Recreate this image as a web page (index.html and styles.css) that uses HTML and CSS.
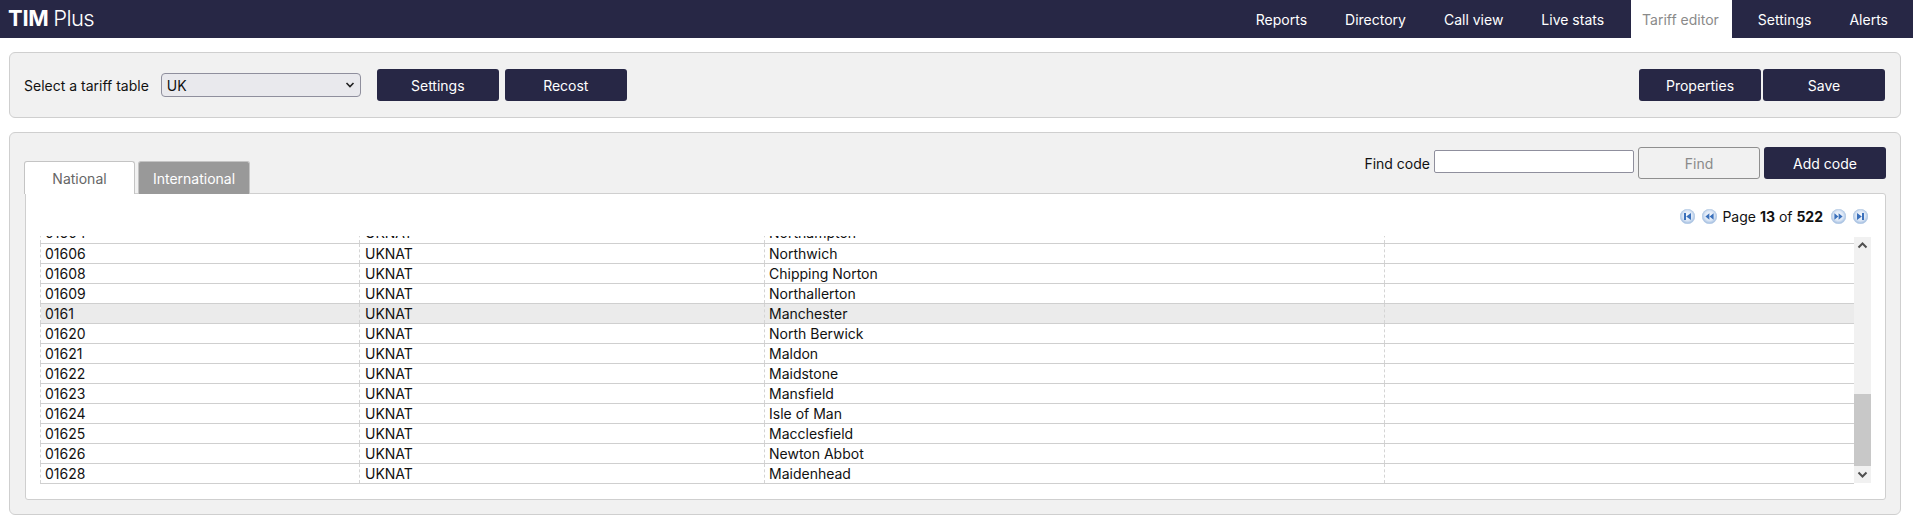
FILE: index.html
```html
<!DOCTYPE html>
<html lang="en">
<head>
  <meta charset="UTF-8">
  <meta name="viewport" content="width=device-width, initial-scale=1.0">
  <title>TIM Plus - Tariff editor</title>
  <link rel="stylesheet" href="styles.css">
</head>
<body>
  <header class="topbar">
    <div class="logo"><strong>TIM</strong> <span>Plus</span></div>
    <nav class="mainnav">
      <a href="#">Reports</a>
      <a href="#">Directory</a>
      <a href="#">Call view</a>
      <a href="#">Live stats</a>
      <a href="#" class="current">Tariff editor</a>
      <a href="#">Settings</a>
      <a href="#">Alerts</a>
    </nav>
  </header>

  <section class="panel toolbar">
    <label class="table-label" for="tariffTable">Select a tariff table</label>
    <select id="tariffTable" class="table-select"><option>UK</option></select>
    <div class="btn-group">
      <button class="btn">Settings</button>
      <button class="btn">Recost</button>
    </div>
    <div class="btn-group push-right">
      <button class="btn">Properties</button>
      <button class="btn">Save</button>
    </div>
  </section>

  <section class="panel editor">
    <div class="tabrow">
      <div class="tab active">National</div>
      <div class="tab second">International</div>
      <div class="find">
        <label for="findCode">Find code</label>
        <input id="findCode" type="text">
        <button class="btn btn-off">Find</button>
        <button class="btn">Add code</button>
      </div>
    </div>

    <div class="tabbody">
      <div class="pager">
        <svg class="pg" viewBox="0 0 15 15"><use href="#pgBase"/><path class="pg-mark" d="M4 4h2v7H4zM11 4v7L6.2 7.5z"/></svg>
        <svg class="pg" viewBox="0 0 15 15"><use href="#pgBase"/><path class="pg-mark" d="M7.4 4.2v6.6L3.4 7.5zM11.6 4.2v6.6L7.6 7.5z"/></svg>
        <span class="pg-text">Page <b>13</b> of <b>522</b></span>
        <svg class="pg" viewBox="0 0 15 15"><use href="#pgBase"/><path class="pg-mark" d="M3.4 4.2v6.6l4-3.3zM7.6 4.2v6.6l4-3.3z"/></svg>
        <svg class="pg" viewBox="0 0 15 15"><use href="#pgBase"/><path class="pg-mark" d="M4 4v7l4.8-3.5zM9 4h2v7H9z"/></svg>
      </div>

      <div class="grid">
        <div class="rows">
          <table class="codes">
            <tr><td>01604</td><td>UKNAT</td><td>Northampton</td><td></td></tr>
            <tr><td>01606</td><td>UKNAT</td><td>Northwich</td><td></td></tr>
            <tr><td>01608</td><td>UKNAT</td><td>Chipping Norton</td><td></td></tr>
            <tr><td>01609</td><td>UKNAT</td><td>Northallerton</td><td></td></tr>
            <tr class="hover"><td>0161</td><td>UKNAT</td><td>Manchester</td><td></td></tr>
            <tr><td>01620</td><td>UKNAT</td><td>North Berwick</td><td></td></tr>
            <tr><td>01621</td><td>UKNAT</td><td>Maldon</td><td></td></tr>
            <tr><td>01622</td><td>UKNAT</td><td>Maidstone</td><td></td></tr>
            <tr><td>01623</td><td>UKNAT</td><td>Mansfield</td><td></td></tr>
            <tr><td>01624</td><td>UKNAT</td><td>Isle of Man</td><td></td></tr>
            <tr><td>01625</td><td>UKNAT</td><td>Macclesfield</td><td></td></tr>
            <tr><td>01626</td><td>UKNAT</td><td>Newton Abbot</td><td></td></tr>
            <tr><td>01628</td><td>UKNAT</td><td>Maidenhead</td><td></td></tr>
          </table>
        </div>
        <div class="scrollbar">
          <svg class="arrow" viewBox="0 0 17 17"><path d="M4.5 10.5l4-4 4 4" /></svg>
          <div class="track"><div class="thumb"></div></div>
          <svg class="arrow" viewBox="0 0 17 17"><path d="M4.5 6.5l4 4 4-4" /></svg>
        </div>
      </div>
    </div>
  </section>

  <!-- shared round button for the pager icons -->
  <svg class="defs" aria-hidden="true">
    <defs>
      <radialGradient id="pgFill" cx="50%" cy="45%" r="55%">
        <stop offset="0%" stop-color="#ffffff"/>
        <stop offset="60%" stop-color="#dbe6f5"/>
        <stop offset="100%" stop-color="#9dbade"/>
      </radialGradient>
      <circle id="pgBase" cx="7.5" cy="7.5" r="7.3" fill="url(#pgFill)" stroke="#aec6e3" stroke-width="0.6"/>
    </defs>
  </svg>
</body>
</html>
```

FILE: styles.css
```css
* {
  box-sizing: border-box;
}

body {
  font-family: Inter, "Liberation Sans", Arial, sans-serif;
  font-size: 14px;
  margin: 0;
  padding: 0;
  background-color: #fff;
  color: #111;
}

.defs {
  position: absolute;
  width: 0;
  height: 0;
}

/* top bar */
.topbar {
  display: flex;
  justify-content: space-between;
  height: 38px;
  background-color: #272745;
  color: #fff;
}

.logo {
  padding-left: 8px;
  font-size: 22px;
  line-height: 37px;
  letter-spacing: -0.3px;
  word-spacing: -1px;
}

.logo strong {
  font-weight: 700;
}

.logo span {
  font-weight: 300;
  letter-spacing: -0.7px;
}

.mainnav {
  display: flex;
  padding-right: 6px;
}

.mainnav a {
  margin: 0 6px;
  padding: 0 13px;
  line-height: 40px;
  color: #fff;
  text-decoration: none;
}

.mainnav a.current {
  margin: 0 7px 0 8px;
  padding-left: 11px;
  background-color: #fff;
  color: #8a8a8a;
}

/* panels */
.panel {
  margin: 0 12px 0 9px;
  background-color: #f1f1f1;
  border: 1px solid #cfcfcf;
  border-radius: 6px;
}

.toolbar {
  display: flex;
  align-items: center;
  height: 66px;
  margin-top: 14px;
  padding: 0 15px 0 14px;
}

.table-label {
  margin-right: 11px;
}

.table-select {
  appearance: none;
  width: 200px;
  height: 24px;
  margin-left: 1px;
  margin-right: 16px;
  padding: 0 5px;
  font-family: inherit;
  font-size: 14px;
  color: #111;
  background-color: #e9e9ed;
  background-image: url("data:image/svg+xml,%3Csvg xmlns='http://www.w3.org/2000/svg' width='10' height='6'%3E%3Cpath d='M1.5 1l3.5 3.5L8.5 1' fill='none' stroke='%23222' stroke-width='1.6'/%3E%3C/svg%3E");
  background-repeat: no-repeat;
  background-position: right 5px center;
  border: 1px solid #8f8f9d;
  border-radius: 4px;
}

.btn-group {
  display: flex;
  gap: 6px;
}

.push-right {
  gap: 2px;
  margin-left: auto;
}

.btn {
  width: 122px;
  height: 32px;
  padding: 0;
  font-family: inherit;
  font-size: 14px;
  color: #fff;
  background-color: #272745;
  border: none;
  border-radius: 3px;
  cursor: pointer;
}

.btn-off {
  color: #8a8a8a;
  background-color: #f1f1f1;
  border: 1px solid #8f8f8f;
}

.editor {
  height: 383px;
  margin-top: 14px;
  padding: 14px 14px 14px 15px;
}

.tabrow {
  display: flex;
  align-items: flex-end;
  height: 47px;
  margin-bottom: -1px;
}

.tab {
  position: relative;
  width: 111px;
  height: 33px;
  margin-left: -1px;
  margin-right: 3px;
  text-align: center;
  line-height: 33px;
  color: #fff;
  background-color: #999;
  border: 1px solid #c4c4c4;
  border-bottom: none;
  border-radius: 3px 3px 0 0;
}

.tab.second {
  width: 112px;
  margin-left: 0;
}

.tab.active {
  z-index: 1;
  color: #666;
  background-color: #fff;
}

.find {
  display: flex;
  align-items: flex-start;
  gap: 4px;
  margin-left: auto;
  height: 47px;
}

.find label {
  line-height: 34px;
}

.find input {
  width: 200px;
  height: 23px;
  margin: 3px 0 0;
  background-color: #fff;
  border: 1px solid #8f8f9d;
  border-radius: 2px;
}

/* tab contents */
.tabbody {
  height: 307px;
  background-color: #fff;
  border: 1px solid #cfcfcf;
  border-radius: 0 3px 3px 3px;
  padding: 0 14px 15px 14px;
}

.pager {
  display: flex;
  align-items: center;
  justify-content: flex-end;
  height: 42px;
  padding: 2px 3px 0 0;
}

.pg {
  width: 15px;
  height: 15px;
  margin-left: 7px;
}

.pg-mark {
  fill: #3a70bb;
}

.pg-text {
  margin: 0 1px 0 5px;
}

.pg-text b {
  font-weight: 700;
}

.grid {
  display: flex;
  height: 248px;
}

.rows {
  flex: 1;
  overflow: hidden;
}

.codes {
  width: 100%;
  margin-top: -13px;
  border-collapse: collapse;
  table-layout: fixed;
}

.codes td {
  height: 20px;
  padding: 0 0 0 5px;
  line-height: 19px;
  white-space: nowrap;
  border-bottom: 1px solid #cfcfcf;
  border-left: 1px dashed #d4d4d4;
}

.codes td:nth-child(1) {
  width: 319px;
  padding-left: 4px;
}

.codes td:nth-child(2) {
  width: 405px;
}

.codes td:nth-child(3) {
  width: 620px;
  padding-left: 4px;
}

.codes tr.hover td {
  background-color: #ebebeb;
}

.scrollbar {
  display: flex;
  flex-direction: column;
  width: 17px;
  margin-top: 1px;
  margin-bottom: 1px;
  background-color: #f1f1f1;
}

.arrow {
  flex: none;
  width: 17px;
  height: 17px;
}

.arrow path {
  fill: none;
  stroke: #505050;
  stroke-width: 2;
}

.track {
  flex: 1;
  display: flex;
  flex-direction: column;
  justify-content: flex-end;
}

.thumb {
  height: 72px;
  background-color: #c8c8c8;
}
```
